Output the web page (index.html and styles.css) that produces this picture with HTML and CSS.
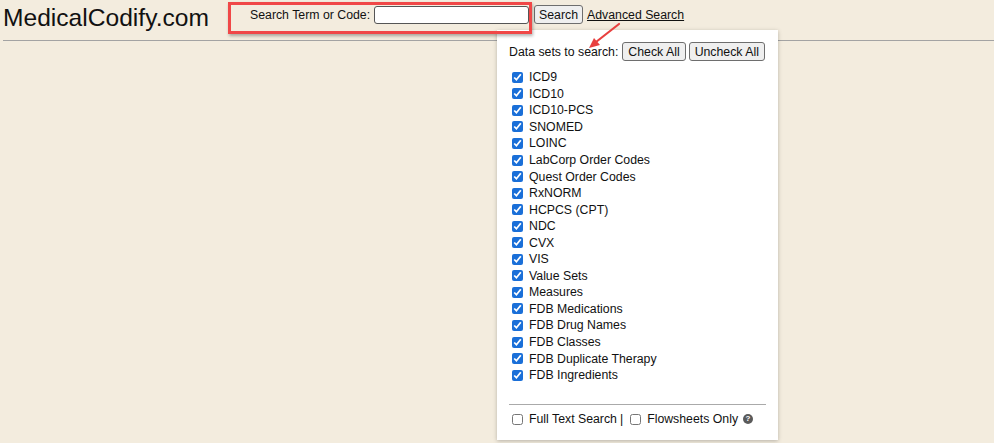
FILE: index.html
```html
<!DOCTYPE html>
<html lang="en">
<head>
    <meta charset="UTF-8">
    <title>MedicalCodify.com</title>
    <link rel="stylesheet" href="styles.css">
</head>
<body>

    <div class="header">
        <div class="logo">MedicalCodify.com</div>
        <form class="search">
            <label for="term">Search Term or Code:</label>
            <input type="text" id="term" class="term">
            <button type="button" class="btn">Search</button>
            <a href="#" class="adv">Advanced Search</a>
        </form>
    </div>

    <!-- data set dropdown -->
    <div class="datasets">
        <div class="ds-head">
            <span>Data sets to search:</span>
            <button type="button" class="btn">Check All</button>
            <button type="button" class="btn">Uncheck All</button>
        </div>
        <div class="ds-list">
            <label><input type="checkbox" checked> ICD9</label>
            <label><input type="checkbox" checked> ICD10</label>
            <label><input type="checkbox" checked> ICD10-PCS</label>
            <label><input type="checkbox" checked> SNOMED</label>
            <label><input type="checkbox" checked> LOINC</label>
            <label><input type="checkbox" checked> LabCorp Order Codes</label>
            <label><input type="checkbox" checked> Quest Order Codes</label>
            <label><input type="checkbox" checked> RxNORM</label>
            <label><input type="checkbox" checked> HCPCS (CPT)</label>
            <label><input type="checkbox" checked> NDC</label>
            <label><input type="checkbox" checked> CVX</label>
            <label><input type="checkbox" checked> VIS</label>
            <label><input type="checkbox" checked> Value Sets</label>
            <label><input type="checkbox" checked> Measures</label>
            <label><input type="checkbox" checked> FDB Medications</label>
            <label><input type="checkbox" checked> FDB Drug Names</label>
            <label><input type="checkbox" checked> FDB Classes</label>
            <label><input type="checkbox" checked> FDB Duplicate Therapy</label>
            <label><input type="checkbox" checked> FDB Ingredients</label>
        </div>
        <div class="ds-foot">
            <label><input type="checkbox"> Full Text Search</label>
            <span class="sep">|</span>
            <label><input type="checkbox"> Flowsheets Only</label>
            <span class="help">?</span>
        </div>
    </div>

    <!-- screenshot annotations -->
    <div class="mark"></div>
    <svg class="arrow" width="40" height="34" viewBox="0 0 40 34">
        <line x1="34" y1="3" x2="11" y2="21" stroke="#e8403f" stroke-width="2.2" stroke-linecap="round"/>
        <polygon points="4,27 9,17 15,24" fill="#e8403f"/>
    </svg>

</body>
</html>
```

FILE: styles.css
```css
body {
    margin: 0;
    font-family: 'Liberation Sans', Arial, sans-serif;
    font-size: 12.3px;
    color: #111;
    background-color: #f3ecde;
}
.header {
    display: flex;
    align-items: flex-start;
    height: 40px;
    margin-left: 3px;
    border-bottom: 1px solid #a3a3a3;
}
.logo {
    font-size: 24.6px;
    padding: 4px 0 0 0;
    width: 247px;
}
.search {
    display: flex;
    align-items: center;
    padding-top: 5px;
}
.search label {
    margin-right: 4px;
}
.term {
    width: 151px;
    height: 14px;
    padding: 1px;
    border: 1px solid #555;
    border-radius: 3px;
    background: white;
}
.btn {
    font-family: inherit;
    font-size: 12.3px;
    height: 19px;
    padding: 0 4px;
    border: 1px solid #6e6e6e;
    border-radius: 3px;
    background: #efefef;
    color: #111;
}
.search .btn {
    margin-left: 5px;
}
.adv {
    color: #111;
    margin-left: 4px;
}
.datasets {
    position: absolute;
    left: 497px;
    top: 30px;
    width: 257px;
    height: 410px;
    padding: 0 12px;
    box-sizing: content-box;
    background: white;
    box-shadow: 0 1px 4px rgba(0, 0, 0, 0.25);
}
.ds-head {
    display: flex;
    align-items: center;
    margin-top: 12px;
    gap: 3px;
}
.ds-head .btn {
    padding: 0 5px;
}
.ds-head span {
    margin-right: 1px;
}
.ds-list {
    margin-top: 8px;
    padding-bottom: 21px;
    border-bottom: 1px solid #aaa;
}
.ds-list label {
    display: flex;
    align-items: center;
    height: 16.56px;
}
input[type=checkbox] {
    width: 11px;
    height: 11px;
    margin: 0 6px 0 3px;
    accent-color: #1a6fd8;
}
.ds-foot {
    display: flex;
    align-items: center;
    margin-top: 7px;
}
.ds-foot label {
    display: flex;
    align-items: center;
}
.sep {
    margin: 0 4px 0 3px;
}
.help {
    display: inline-block;
    width: 10px;
    height: 10px;
    line-height: 10px;
    margin-left: 5px;
    border-radius: 50%;
    background: #5a5a5a;
    color: white;
    font-size: 8px;
    font-weight: bold;
    text-align: center;
}
.mark {
    position: absolute;
    left: 228px;
    top: 2px;
    width: 298px;
    height: 26px;
    border: 3px solid #f04747;
    box-shadow: 1px 2px 3px rgba(0, 0, 0, 0.3);
}
.arrow {
    position: absolute;
    left: 585px;
    top: 21px;
}
```
